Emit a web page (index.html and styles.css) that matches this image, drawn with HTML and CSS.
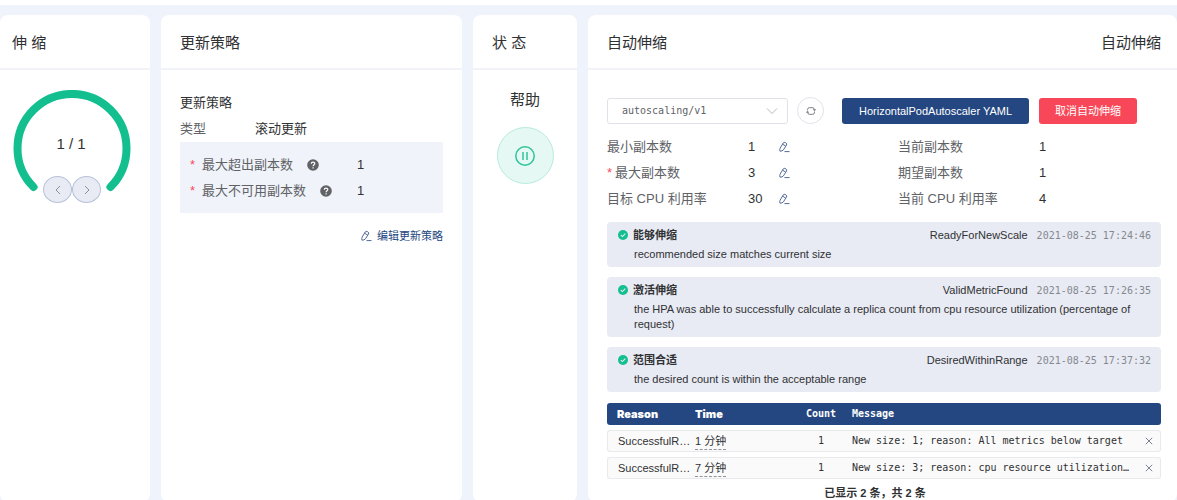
FILE: index.html
```html
<!DOCTYPE html>
<html lang="zh-CN">
<head>
<meta charset="utf-8">
<title>自动伸缩</title>
<link rel="stylesheet" href="styles.css">
</head>
<body>
<svg class="sprite" aria-hidden="true">
  <symbol id="edit" viewBox="0 0 12 12"><path d="M2 10.2Q1.4 8.6 2.1 7.2L5.2 2Q6 .9 7.2 1.5L8 2Q9.2 2.8 8.5 4L5.4 8.9Q4.2 10.2 2 10.2ZM4.6 3.2 7.6 5M6.5 10.6H11.5" fill="none" stroke="currentColor"/></symbol>
  <symbol id="help" viewBox="0 0 12 12"><circle cx="6" cy="6" r="5.8" fill="#606266"/><path d="M4.3 4.8C4.3 2.5 7.8 2.6 7.8 4.6 7.8 5.8 6.1 5.8 6.1 7.2M6.1 8.2V9.4" fill="none" stroke="#fff" stroke-width="1.2"/></symbol>
  <symbol id="ok" viewBox="0 0 10 10"><circle cx="5" cy="5" r="5" fill="#13bf8f"/><path d="M2.8 5.1 4.4 6.6 7.3 3.7" fill="none" stroke="#e8ebf3" stroke-width="1.1"/></symbol>
  <symbol id="close" viewBox="0 0 8 8"><path d="M.8.8 7.2 7.2M7.2.8.8 7.2" fill="none" stroke="currentColor"/></symbol>
</svg>
<main class="board">
  <section class="card scale">
    <h2 class="card-head">伸 缩</h2>
    <div class="gauge">
      <svg class="gauge-ring" viewBox="0 0 118 104"><path d="M20.5 97A54.5 54.5 0 1 1 97.5 97" fill="none" stroke="#13bf8f" stroke-width="8" stroke-linecap="round"/></svg>
      <span class="gauge-text">1 / 1</span>
      <div class="steps">
        <button class="step" aria-label="减少"><svg class="chevron" viewBox="0 0 8 10"><path d="M6 1 2 5 6 9" fill="none" stroke="currentColor"/></svg></button>
        <button class="step" aria-label="增加"><svg class="chevron" viewBox="0 0 8 10"><path d="M2 1 6 5 2 9" fill="none" stroke="currentColor"/></svg></button>
      </div>
    </div>
  </section>

  <section class="card">
    <h2 class="card-head">更新策略</h2>
    <div class="card-body strategy">
      <h3 class="sub">更新策略</h3>
      <div class="type-row"><span class="label">类型</span><span>滚动更新</span></div>
      <div class="limits">
        <div class="limit"><span class="limit-name"><i class="req">*</i>最大超出副本数<svg class="help"><use href="#help"/></svg></span><span>1</span></div>
        <div class="limit"><span class="limit-name"><i class="req">*</i>最大不可用副本数<svg class="help"><use href="#help"/></svg></span><span>1</span></div>
      </div>
      <button class="edit-link"><svg class="edit"><use href="#edit"/></svg>编辑更新策略</button>
    </div>
  </section>

  <section class="card">
    <h2 class="card-head">状 态</h2>
    <div class="status">
      <span>帮助</span>
      <button class="pause" aria-label="暂停"><svg class="pause-icon" viewBox="0 0 20 20" fill="none" stroke="#2fc49b"><circle cx="10" cy="10" r="9.2" stroke-width="1.5"/><path d="M8 6V14M12 6V14" stroke-width="1.5"/></svg></button>
    </div>
  </section>

  <section class="card auto">
    <h2 class="card-head"><span>自动伸缩</span><span>自动伸缩</span></h2>
    <div class="card-body">
      <div class="toolbar">
        <div class="select-wrap">
          <select class="select" aria-label="版本"><option>autoscaling/v1</option></select>
          <svg class="arrow" viewBox="0 0 12 8"><path d="M1 1.5 6 6.5 11 1.5" fill="none" stroke="#b4b8c0"/></svg>
        </div>
        <button class="refresh" aria-label="刷新"><svg class="refresh-icon" viewBox="0 0 12 12" fill="none" stroke="#60646c"><path d="M1.8 5.2V4.4Q1.8 2 4.2 2H7.6Q10.2 2 10.2 4.6V5.4M10.2 6.8V7.6Q10.2 10 7.8 10H4.4Q1.8 10 1.8 7.4V6.6"/><path d="M8.4 4 10.2 5.6 12 4M0 8 1.8 6.4 3.6 8" stroke-width=".9"/></svg></button>
        <button class="btn primary">HorizontalPodAutoscaler YAML</button>
        <button class="btn danger">取消自动伸缩</button>
      </div>
      <div class="metrics">
        <span class="label">最小副本数</span><span>1</span><button class="pen" aria-label="编辑最小副本数"><svg class="edit"><use href="#edit"/></svg></button><span class="label">当前副本数</span><span>1</span>
        <span class="label"><i class="req">*</i>最大副本数</span><span>3</span><button class="pen" aria-label="编辑最大副本数"><svg class="edit"><use href="#edit"/></svg></button><span class="label">期望副本数</span><span>1</span>
        <span class="label">目标 CPU 利用率</span><span>30</span><button class="pen" aria-label="编辑目标 CPU 利用率"><svg class="edit"><use href="#edit"/></svg></button><span class="label">当前 CPU 利用率</span><span>4</span>
      </div>
      <div class="conditions">
        <article class="cond">
          <div class="cond-head"><svg class="ok"><use href="#ok"/></svg><b class="cond-name">能够伸缩</b><span>ReadyForNewScale</span><time class="time">2021-08-25 17:24:46</time></div>
          <p class="cond-text">recommended size matches current size</p>
        </article>
        <article class="cond">
          <div class="cond-head"><svg class="ok"><use href="#ok"/></svg><b class="cond-name">激活伸缩</b><span>ValidMetricFound</span><time class="time">2021-08-25 17:26:35</time></div>
          <p class="cond-text">the HPA was able to successfully calculate a replica count from cpu resource utilization (percentage of request)</p>
        </article>
        <article class="cond">
          <div class="cond-head"><svg class="ok"><use href="#ok"/></svg><b class="cond-name">范围合适</b><span>DesiredWithinRange</span><time class="time">2021-08-25 17:37:32</time></div>
          <p class="cond-text">the desired count is within the acceptable range</p>
        </article>
      </div>
      <table class="events">
        <thead>
          <tr><th class="c-reason">Reason</th><th class="c-time">Time</th><th class="c-count">Count</th><th class="c-msg">Message</th><th class="c-close"></th></tr>
        </thead>
        <tbody>
          <tr><td class="c-reason">SuccessfulR…</td><td class="c-time"><span class="ago">1 分钟</span></td><td class="c-count">1</td><td class="c-msg">New size: 1; reason: All metrics below target</td><td class="c-close"><button class="close" aria-label="关闭"><svg class="x"><use href="#close"/></svg></button></td></tr>
          <tr><td class="c-reason">SuccessfulR…</td><td class="c-time"><span class="ago">7 分钟</span></td><td class="c-count">1</td><td class="c-msg">New size: 3; reason: cpu resource utilization…</td><td class="c-close"><button class="close" aria-label="关闭"><svg class="x"><use href="#close"/></svg></button></td></tr>
        </tbody>
      </table>
      <p class="total">已显示 2 条，共 2 条</p>
    </div>
  </section>
</main>
</body>
</html>
```
FILE: styles.css
```css
* { box-sizing: border-box; }
html { overflow: hidden; }
body {
  margin: 0;
  min-height: 100vh;
  border-top: 5px solid #fff;
  background: #eff3fb;
  color: #303133;
  font: 13px/26px "Liberation Sans", "Noto Sans CJK SC", sans-serif;
}
button { margin: 0; padding: 0; border: 0; background: none; color: inherit; font: inherit; cursor: pointer; }
svg { display: block; flex: none; }
.sprite { position: absolute; width: 0; height: 0; }

.board {
  display: grid;
  grid-template-columns: 150px 301px 104px minmax(0, 1fr);
  gap: 11px;
  min-height: calc(100vh - 5px);
  padding-top: 10px;
}
.card { min-width: 0; border-radius: 8px; background: #fff; }
.card-head {
  display: flex;
  justify-content: space-between;
  margin: 0;
  padding: 15px 16px 12px 19px;
  border-bottom: 2px solid #f1f3f9;
  font-size: 15px;
  font-weight: 400;
}
.scale .card-head { padding-left: 12px; }
.card-body { padding: 27px 16px 0 19px; }
.label { color: #606266; }
.req { color: #fb4a5c; font-style: normal; }

.gauge { position: relative; margin: 20px 0 0 13px; width: 118px; }
.gauge-ring { width: 118px; height: 104px; }
.gauge-text { position: absolute; top: 41px; width: 116px; font-size: 15px; text-align: center; }
.steps { position: absolute; top: 86px; left: 30px; display: flex; }
.step {
  display: grid;
  place-items: center;
  width: 29px;
  height: 27px;
  border: 1px solid #b6c2da;
  border-radius: 50%;
  background: #e8ebf3;
  color: #8a8f9b;
}
.chevron { width: 8px; height: 10px; }

.strategy { padding: 20px 19px 0; }
.sub { margin: 0; font-size: 13px; font-weight: 400; }
.type-row { display: flex; }
.type-row .label { width: 75px; }
.limits { padding: 10px 10px 9px; background: #f0f3f9; }
.limit { display: flex; }
.limit-name { display: flex; align-items: center; width: 167px; color: #606266; }
.limit .req { width: 12px; }
.help { width: 12px; height: 12px; margin-left: 14px; }
.edit-link { display: flex; align-items: center; gap: 5px; margin: 10px 0 0 auto; color: #244781; font-size: 11px; }
.edit { width: 12px; height: 12px; color: #526b99; }

.status { display: flex; flex-direction: column; align-items: center; gap: 14px; padding-top: 17px; font-size: 15px; }
.pause {
  display: grid;
  place-items: center;
  width: 57px;
  height: 57px;
  border: 1px solid #b7ebdc;
  border-radius: 50%;
  background: #e6f8f3;
}
.pause-icon { width: 20px; height: 20px; }

.toolbar { display: flex; align-items: center; }
.select-wrap { position: relative; width: 181px; }
.select {
  display: block;
  width: 100%;
  height: 26px;
  padding: 0 14px;
  border: 1px solid #dfe2e9;
  border-radius: 3px;
  appearance: none;
  background: #fff;
  color: #606266;
  font: 10px "DejaVu Sans Mono", monospace;
}
.arrow { position: absolute; top: 9px; right: 10px; width: 12px; height: 8px; pointer-events: none; }
.refresh {
  display: grid;
  place-items: center;
  width: 27px;
  height: 27px;
  margin: 0 18px 0 9px;
  border: 1px solid #dfe2e9;
  border-radius: 50%;
}
.refresh-icon { width: 10px; height: 10px; }
.btn { height: 26px; padding: 0 16px; border-radius: 3px; color: #fff; font-size: 11px; line-height: 26px; white-space: nowrap; }
.primary { padding: 0 17px; background: #244781; }
.danger { margin-left: 10px; background: #f84759; }

.metrics { display: grid; grid-template-columns: 141px 30px 120px 141px auto; margin-top: 10px; }
.metrics .req { margin-right: 3px; }
.pen { display: flex; align-items: center; }

.conditions { display: grid; gap: 10px; margin-top: 10px; font-size: 11px; line-height: 15px; }
.cond { padding: 5px 10px; border-radius: 4px; background: #e8ebf3; }
.cond-head { display: flex; align-items: center; height: 16px; }
.ok { width: 10px; height: 10px; margin-left: 1px; }
.cond-name { flex: 1; margin-left: 5px; }
.time { margin-left: 9px; color: #85888f; font: 10px/15px "DejaVu Sans Mono", monospace; }
.cond-text { margin: 4px 0 0 17px; }

.events {
  width: 100%;
  margin-top: 6px;
  border-spacing: 0 5px;
  table-layout: fixed;
  font: 10px/20px "DejaVu Sans Mono", "Noto Sans CJK SC", monospace;
}
.events th, .events td { height: 22px; padding: 0; text-align: left; white-space: nowrap; vertical-align: middle; }
.events th { background: #244781; color: #fff; }
.events td { border: solid #e8eaee; border-width: 1px 0; background: #fafafa; }
.events th:first-child, .events td:first-child { border-radius: 3px 0 0 3px; }
.events th:last-child, .events td:last-child { border-radius: 0 3px 3px 0; }
.events td:first-child { border-left-width: 1px; }
.events td:last-child { border-right-width: 1px; }
.events .c-reason { width: 88px; padding-left: 10px; font-family: "Liberation Sans", sans-serif; font-size: 11px; }
.events .c-time { width: 110px; font-family: "Liberation Sans", "Noto Sans CJK SC", sans-serif; font-size: 11px; }
.events th.c-reason, .events th.c-time { font-family: Inter, sans-serif; font-weight: 900; }
.events .c-count { width: 32px; text-align: center; }
.events .c-msg { width: auto; padding-left: 15px; }
.events .c-close { width: 22px; }
.ago { display: inline-block; border-bottom: 1px dashed #909399; line-height: 15px; }
.close { display: block; margin-left: 6px; color: #7b8190; }
.x { width: 8px; height: 8px; }
.total { margin: 0; padding-right: 18px; font-size: 11px; font-weight: 700; line-height: 18px; text-align: center; }
```
